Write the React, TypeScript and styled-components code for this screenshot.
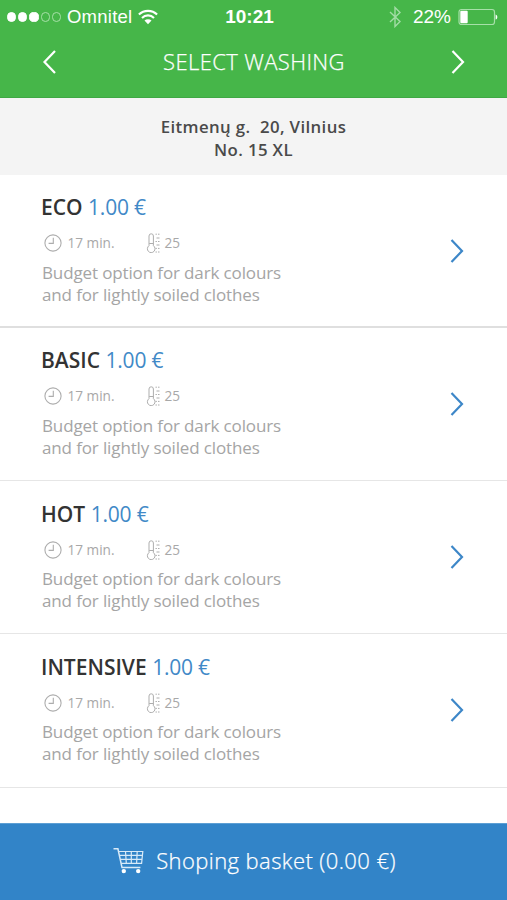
import React from 'react';
import styled, { createGlobalStyle } from 'styled-components';

const GlobalStyle = createGlobalStyle`
  * { box-sizing: border-box; }
  body { margin: 0; background: #fff; }
`;

const Screen = styled.div`
  width: 507px;
  height: 900px;
  display: flex;
  flex-direction: column;
  overflow: hidden;
  background: #fff;
  font-family: 'Open Sans', 'Noto Sans', sans-serif;
`;

const Header = styled.header`
  height: 98px;
  flex: none;
  background: #46b649;
  border-bottom: 1px solid #3fa844;
  color: #fff;
`;

const StatusBar = styled.div`
  height: 34px;
  display: grid;
  grid-template-columns: 1fr auto 1fr;
  align-items: center;
  padding: 0 9px 0 7px;
  font-family: 'Liberation Sans', Arial, sans-serif;
  font-size: 19px;
  line-height: 34px;
`;

const Carrier = styled.div`
  display: flex;
  align-items: center;
  font-size: 18.5px;
  letter-spacing: 0.25px;
`;

const Dots = styled.div`
  display: flex;
  gap: 2px;
  margin-right: 6px;
`;

const Dot = styled.i<{ $on: boolean }>`
  width: 9.2px;
  height: 9.2px;
  border-radius: 50%;
  border: 1px solid ${p => (p.$on ? '#fff' : '#a6e0a8')};
  background: ${p => (p.$on ? '#fff' : 'transparent')};
`;

const WifiIcon = styled.svg`
  margin-left: 6px;
  margin-top: -1px;
`;

const Clock = styled.div`
  font-weight: 700;
  padding-right: 6px;
`;

const Power = styled.div`
  display: flex;
  align-items: center;
  justify-content: flex-end;
`;

const Percent = styled.span`
  margin: 0 7px 0 12px;
`;

const NavBar = styled.nav`
  height: 55px;
  display: flex;
  align-items: center;
  justify-content: space-between;
  padding: 0 41px 0 42px;
`;

const Title = styled.h1`
  margin: 0 0 2px;
  font-size: 22px;
  font-weight: 300;
  line-height: 30px;
  letter-spacing: 0.38px;
  -webkit-text-stroke: 0.25px currentColor;
`;

const Address = styled.section`
  height: 77px;
  flex: none;
  padding: 17px 0 0;
  background: #f4f4f4;
  color: #4a4a4a;
  font-size: 16.8px;
  font-weight: 600;
  line-height: 23px;
  letter-spacing: 0.38px;
  text-align: center;
  white-space: pre;
`;

const List = styled.main`
  flex: 1;
`;

const Option = styled.article`
  height: 153.2px;
  display: flex;
  justify-content: space-between;
  align-items: center;
  padding: 0 42px 0 41px;
  border-bottom: 1px solid #e6e6e6;
  &:first-child {
    height: 153px;
    border-bottom: 2px solid #dfdfdf;
  }
`;

const Details = styled.div`
  height: 100%;
  padding-top: 18.4px;
`;

const Name = styled.h2`
  margin: 0;
  font-size: 21px;
  font-weight: 600;
  line-height: 28px;
  color: #333;
`;

const Price = styled.span`
  font-weight: 400;
  color: #4189c7;
  letter-spacing: -0.2px;
`;

const Meta = styled.div`
  display: flex;
  align-items: center;
  height: 22px;
  margin: 11px 0 7px 2.5px;
  font-size: 13.6px;
  line-height: 22px;
  color: #a8a8a8;
`;

const Duration = styled.span`
  width: 78px;
  margin-left: 6px;
`;

const Temperature = styled.span`
  margin-left: 4px;
`;

const Description = styled.p`
  margin: 0 0 0 1px;
  padding-top: 0.7px;
  font-size: 17px;
  line-height: 21.6px;
  letter-spacing: -0.13px;
  color: #a5a5a5;
`;

const Basket = styled.footer`
  height: 77px;
  flex: none;
  display: flex;
  align-items: center;
  justify-content: center;
  gap: 12px;
  padding: 0 0 4px 2px;
  border-top: 1px solid #5d9fd4;
  background: #3284c8;
  color: #fff;
  font-size: 22px;
  font-weight: 300;
  letter-spacing: 0.42px;
  -webkit-text-stroke: 0.25px currentColor;
`;

const Chevron = ({ color, left }: { color: string; left?: boolean }) => (
  <svg width="16" height="26" viewBox="0 0 16 26" fill="none" stroke={color} strokeWidth="2.2">
    <path d={left ? 'M13 2 2.5 13 13 24' : 'M2.5 2 13 13 2.5 24'} />
  </svg>
);

const Wifi = () => (
  <WifiIcon width="20" height="16" viewBox="0 0 20 16" fill="none" stroke="#fff" strokeWidth="2.1">
    <path d="M.9 5.6a12.9 12.9 0 0 1 18.2 0M4 8.9a8.5 8.5 0 0 1 12 0" />
    <path d="M6.5 11.6a5 5 0 0 1 7 0L10 15.2z" fill="#fff" stroke="none" />
  </WifiIcon>
);

const Bluetooth = () => (
  <svg width="12" height="22" viewBox="0 0 12 22" fill="none" stroke="#a3dca6" strokeWidth="1.4">
    <path d="M1 6l10 9.5L6 20.5V1.5l5 5L1 16" />
  </svg>
);

const Battery = () => (
  <svg width="40" height="18" viewBox="0 0 40 18" fill="none">
    <rect x="1" y="1.5" width="35.5" height="15" rx="2.5" stroke="#a6e0a8" strokeWidth="1.2" />
    <rect x="2.3" y="2.8" width="7.4" height="12.4" rx="1" fill="#fff" />
    <path d="M37.6 6.4c2.3.8 2.3 4.4 0 5.2z" fill="#fff" />
  </svg>
);

const Timer = () => (
  <svg width="18" height="18" viewBox="0 0 18 18" fill="none" stroke="#adadad" strokeWidth="1.1">
    <circle cx="9" cy="9" r="8.1" />
    <path d="M9.3 3.8v5.6H4.6" />
  </svg>
);

const Thermometer = () => (
  <svg width="15" height="20" viewBox="0 0 15 20" fill="none" stroke="#adadad" strokeWidth="1">
    <path d="M3 12.7V3a2.2 2.2 0 0 1 4.4 0v9.7a3.8 3.8 0 1 1-4.4 0z" />
    <path d="M3.2 10.5h4" />
    <path d="M9.5 1.2h1.4M12 1.2h1.5M10.5 5h3M9.5 8.5h1.4M12 8.5h1.5M10.5 12h3M9.5 15.4h1.4M12 15.4h1.5M9.5 19h1.4M12 19h1.5" />
  </svg>
);

const Cart = () => (
  <svg width="31" height="27" viewBox="0 0 31 27" fill="none" stroke="#d8eaf8" strokeWidth="1.5">
    <path d="M.5 1.8h4.4L9 20.4h18.4" />
    <path d="M5.6 4.5h24.2l-1.2 11.8H8.2M6.5 8.4h22.9M7.4 12.4h21.5M12.5 4.5l.8 11.8M18.3 4.5v11.8M24.2 4.5l-.6 11.8" strokeWidth="1.2" />
    <circle cx="10.8" cy="24.1" r="2.2" fill="#fff" stroke="none" />
    <circle cx="25.2" cy="24.1" r="2.2" fill="#fff" stroke="none" />
  </svg>
);

const programs = ['ECO', 'BASIC', 'HOT', 'INTENSIVE'];

export default function App() {
  return (
    <Screen>
      <GlobalStyle />
      <Header>
        <StatusBar>
          <Carrier>
            <Dots>
              {[true, true, true, false, false].map((on, i) => <Dot key={i} $on={on} />)}
            </Dots>
            Omnitel
            <Wifi />
          </Carrier>
          <Clock>10:21</Clock>
          <Power>
            <Bluetooth />
            <Percent>22%</Percent>
            <Battery />
          </Power>
        </StatusBar>
        <NavBar>
          <Chevron color="#fff" left />
          <Title>SELECT WASHING</Title>
          <Chevron color="#fff" />
        </NavBar>
      </Header>
      <Address>{'Eitmenų g.  20, Vilnius\nNo. 15 XL'}</Address>
      <List>
        {programs.map(name => (
          <Option key={name}>
            <Details>
              <Name>{name} <Price>1.00 €</Price></Name>
              <Meta>
                <Timer />
                <Duration>17 min.</Duration>
                <Thermometer />
                <Temperature>25</Temperature>
              </Meta>
              <Description>
                Budget option for dark colours<br />and for lightly soiled clothes
              </Description>
            </Details>
            <Chevron color="#3d87c8" />
          </Option>
        ))}
      </List>
      <Basket>
        <Cart />
        <span>Shoping basket (0.00 €)</span>
      </Basket>
    </Screen>
  );
}
